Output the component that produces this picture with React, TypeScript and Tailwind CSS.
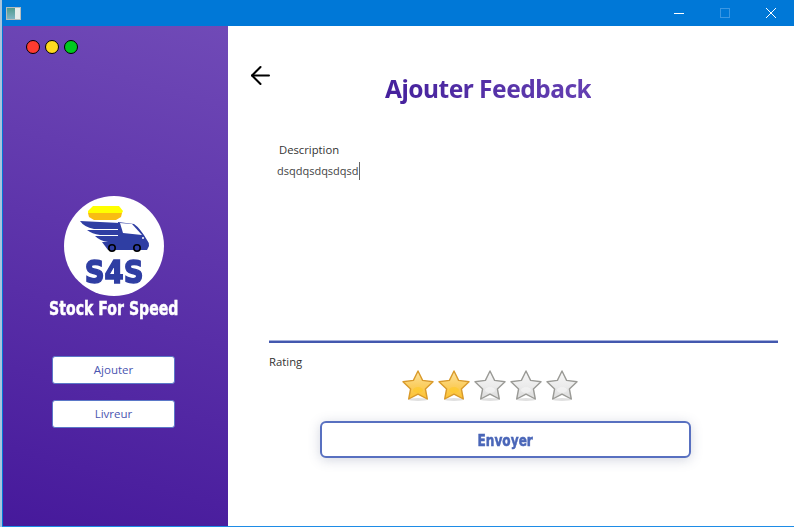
import { ArrowLeft } from 'lucide-react';

const body = "font-['Open_Sans','Noto_Sans',sans-serif]";
const heavy = "font-['DejaVu_Sans',sans-serif] font-bold";

const STAR = 'M16 2 L20.6 11.4 L31 12.8 L23.4 20 L25.3 30 L16 25.2 L6.7 30 L8.6 20 L1 12.8 L11.4 11.4 Z';

function Star({ on, id }: { on: boolean; id: string }) {
  return (
    <svg width="32" height="34" viewBox="0 0 32 34">
      <defs>
        <linearGradient id={id} x1="0" y1="0" x2="0" y2="1">
          <stop offset="0" stopColor={on ? '#fde3a0' : '#f8f8f8'} />
          <stop offset="0.5" stopColor={on ? '#fbcf63' : '#ececec'} />
          <stop offset="1" stopColor={on ? '#fdc22f' : '#dcdcdc'} />
        </linearGradient>
      </defs>
      <ellipse cx="16" cy="30.5" rx="10" ry="1.5" fill="#000" opacity="0.12" />
      <path
        d={STAR}
        fill={`url(#${id})`}
        stroke={on ? '#d99a2b' : '#9a9a96'}
        strokeWidth="1.4"
        strokeLinejoin="round"
      />
      <ellipse cx="16" cy="21" rx="5" ry="3" fill={on ? '#ffc926' : '#f6f6f6'} opacity="0.6" />
    </svg>
  );
}

function Logo() {
  return (
    <div className="w-[100px] h-[100px] rounded-full bg-white flex flex-col items-center overflow-hidden">
      <svg width="100" height="60" viewBox="0 0 100 60" className="shrink-0">
        <path d="M29 10 L55 10 L59 15 L58 17 L24 17 L24 15 Z" fill="#ffff00" />
        <path d="M24 17 L58 17 L57 21 L52 24 L30 24 L25 21 Z" fill="#f9bd12" />
        <path d="M16 25 L56 27 L56 33 L30 33 Q20 31 16 25 Z" fill="#2f3ea3" />
        <path d="M23 34 L56 34 L56 39 L36 39 Q28 38 23 34 Z" fill="#2f3ea3" />
        <path d="M31 40 L56 40 L56 46 L44 46 Q36 45 31 40 Z" fill="#2f3ea3" />
        <path d="M54 26 L70 28 Q76 32 83 44 Q85 46 85 50 L83 54 L44 54 L38 46 L54 46 Z" fill="#2f3ea3" />
        <path d="M56 27 L68 28 L78 39 L59 37 Z" fill="#ffffff" />
        <circle cx="79" cy="42" r="1" fill="#ffffff" />
        <circle cx="48" cy="52" r="3.2" fill="#2f3ea3" stroke="#000" strokeWidth="1.6" />
        <circle cx="73" cy="52" r="3.2" fill="#2f3ea3" stroke="#000" strokeWidth="1.6" />
      </svg>
      <span
        className={`${heavy} inline-block scale-x-[0.86] text-[32px] leading-[28px] text-[#2f3ea3] [-webkit-text-stroke:1.5px_#2f3ea3] mt-[2px]`}
      >
        S4S
      </span>
    </div>
  );
}

export default function App() {
  return (
    <div className={`${body} w-[794px] h-[527px] flex flex-col bg-[#0078d7] border-l-2 border-[#a9c4dd] overflow-hidden`}>
      <div className="h-[26px] flex items-center shrink-0">
        <div className="ml-[4px] w-[15px] h-[13px] bg-[#e6ecea] border border-[#b8bcbc] flex">
          <div className="w-[8px] h-full bg-gradient-to-b from-[#4f9a8e] to-[#7fb5c4]" />
        </div>
        <div className="ml-auto flex items-center text-white">
          <div className="w-[46px] flex justify-center">
            <div className="w-[10px] h-px bg-white" />
          </div>
          <div className="w-[46px] flex justify-center">
            <div className="w-[10px] h-[10px] border border-[#3b97e3]" />
          </div>
          <div className="w-[46px] flex justify-center">
            <svg width="12" height="12" viewBox="0 0 12 12">
              <path d="M1 1 L11 11 M11 1 L1 11" stroke="#fff" strokeWidth="1" />
            </svg>
          </div>
        </div>
      </div>

      <div className="flex-1 flex pl-px min-h-0">
        <aside className="w-[225px] pr-[3px] bg-[linear-gradient(195deg,#704ab7,#46199b)] flex flex-col items-center">
          <div className="self-start ml-[23px] mt-[14px] flex gap-[5px]">
            <div className="w-[14px] h-[14px] rounded-full bg-[#ff3b30] border border-black" />
            <div className="w-[14px] h-[14px] rounded-full bg-[#ffd91f] border border-black" />
            <div className="w-[14px] h-[14px] rounded-full bg-[#00c91f] border border-black" />
          </div>
          <div className="mt-[142px]">
            <Logo />
          </div>
          <div
            className={`${heavy} inline-block scale-x-[0.705] whitespace-nowrap text-white text-[20px] leading-[24px] [-webkit-text-stroke:0.5px_white]`}
          >
            Stock For Speed
          </div>
          <button className="mt-[36px] mr-px w-[123px] h-[28px] bg-white rounded-[3px] border border-[#5b78c8] text-[11.5px] text-[#4a55b0]">
            Ajouter
          </button>
          <button className="mt-[16px] mr-px w-[123px] h-[28px] bg-white rounded-[3px] border border-[#5b78c8] text-[11.5px] text-[#4a55b0]">
            Livreur
          </button>
        </aside>

        <main className="flex-1 bg-white flex flex-col pl-[41px] pr-[16px]">
          <div className="flex items-start h-[90px]">
            <ArrowLeft size={29} strokeWidth={1.7} className="text-black mt-[35px] -ml-[23px] shrink-0" />
            <h1 className="ml-[110px] mt-[46px] bg-gradient-to-r from-[#45209c] to-[#6540b2] bg-clip-text text-transparent text-[24.5px] leading-[34px] tracking-[-0.5px] font-bold font-['Noto_Sans',sans-serif] whitespace-nowrap">
              Ajouter Feedback
            </h1>
          </div>
          <label className="ml-[10px] mt-[25px] text-[11.25px] leading-[18px] text-[#333]">Description</label>
          <div className="ml-[8px] mt-[3px] h-[178px] text-[11px] leading-[18px] text-[#444] flex items-start">
            <span>dsqdqsdqsdqsd</span>
            <span className="w-px h-[18px] bg-[#666]" />
          </div>
          <div className="h-[3px] border-t border-[#a5b0dc] bg-[#4358ae]" />
          <div className="mt-[10px] text-[11.3px] leading-[18px] text-[#333]">Rating</div>
          <div className="flex gap-[4px] ml-[133px] -mt-[2px]">
            <Star on id="s1" />
            <Star on id="s2" />
            <Star on={false} id="s3" />
            <Star on={false} id="s4" />
            <Star on={false} id="s5" />
          </div>
          <button className="ml-[51px] mt-[18px] pt-[2px] w-[371px] h-[37px] rounded-[6px] border-2 border-[#5870c0] bg-white shadow-[0_2px_12px_rgba(80,90,130,0.25)]">
            <span
              className={`${heavy} inline-block scale-x-[0.81] text-[#4a66b8] text-[15px] [-webkit-text-stroke:0.5px_#4a66b8]`}
            >
              Envoyer
            </span>
          </button>
        </main>
      </div>
      <div className="h-px bg-[#1e8ce6] shrink-0" />
    </div>
  );
}
